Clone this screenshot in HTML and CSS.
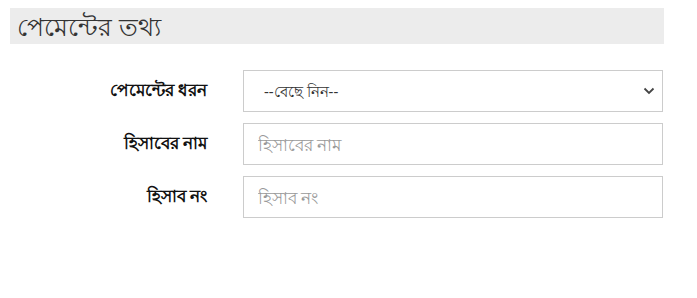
FILE: index.html
```html
<!DOCTYPE html>
<html lang="bn">
<head>
    <meta charset="UTF-8">
    <meta name="viewport" content="width=device-width, initial-scale=1.0">
    <title>পেমেন্টের তথ্য</title>
    <link rel="stylesheet" href="styles.css">
</head>
<body>
    <div class="container">
        <h2 class="section-title">পেমেন্টের তথ্য</h2>
        <div class="form-row">
            <label for="payment-type">পেমেন্টের ধরন</label>
            <div class="select-wrap">
                <select id="payment-type">
                    <option value="">--বেছে নিন--</option>
                    <option value="bank">ব্যাংক</option>
                    <option value="mobile">মোবাইল ব্যাংকিং</option>
                </select>
                <svg class="caret" width="12" height="8" viewBox="0 0 12 8"><path d="M1.5 1.5 L6 6 L10.5 1.5" fill="none" stroke="#444" stroke-width="1.8"/></svg>
            </div>
        </div>
        <div class="form-row">
            <label for="account-name">হিসাবের নাম</label>
            <input type="text" id="account-name" placeholder="হিসাবের নাম">
        </div>
        <div class="form-row">
            <label for="account-no">হিসাব নং</label>
            <input type="text" id="account-no" placeholder="হিসাব নং">
        </div>
    </div>
</body>
</html>
```

FILE: styles.css
```css
body {
    margin: 0;
    font-family: "Noto Sans", "DejaVu Sans", sans-serif;
    color: #222;
    background: #fff;
}
.container {
    width: 654px;
    padding: 8px 0 0 10px;
}
.section-title {
    margin: 0 0 26px;
    height: 36px;
    line-height: 36px;
    padding-left: 7px;
    background: #ececec;
    font-size: 25px;
    font-weight: normal;
    color: #333;
}
.form-row {
    display: grid;
    grid-template-columns: 233px 420px;
    align-items: center;
    margin-bottom: 11px;
}
.form-row label {
    text-align: right;
    padding-right: 36px;
    font-size: 17px;
    font-weight: bold;
    color: #111;
}
.form-row input,
.form-row select {
    width: 100%;
    height: 42px;
    box-sizing: border-box;
    border: 1px solid #ccc;
    border-radius: 0;
    padding: 0 20px 0 14px;
    font-family: inherit;
    font-size: 17px;
    color: #333;
    background: #fff;
    outline: none;
}
.form-row input::placeholder {
    color: #999;
}
.select-wrap {
    position: relative;
}
.form-row select {
    appearance: none;
    padding-left: 20px;
    font-size: 15px;
}
.caret {
    position: absolute;
    right: 8px;
    top: 17px;
    pointer-events: none;
}
```
